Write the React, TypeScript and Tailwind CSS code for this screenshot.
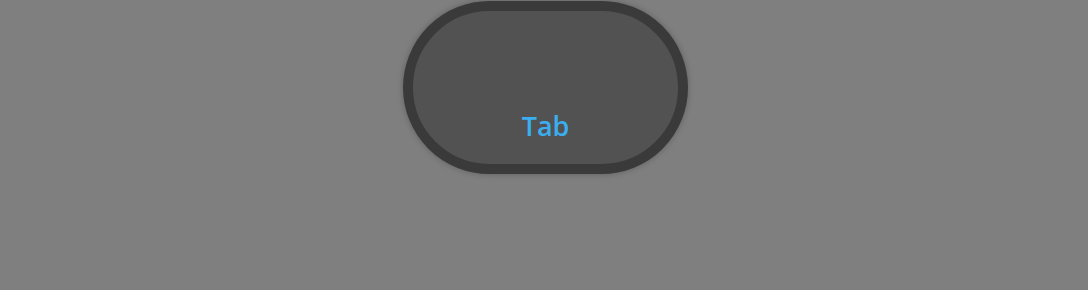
export default function App() {
  return (
    <div className="w-[1088px] h-[290px] bg-[#7f7f7f] flex justify-center pt-px pl-[3px]">
      <div className="w-[285px] h-[173px] rounded-full border-[10px] border-[#3a3a3a] bg-[#525252] shadow-[0_0_6px_rgba(0,0,0,0.25)] flex flex-col items-center pt-[96px]">
        <span
          className="text-[27px] leading-[37px] font-semibold text-[#3aaef0]"
          style={{ fontFamily: '"Open Sans", "Noto Sans", sans-serif' }}
        >
          Tab
        </span>
      </div>
    </div>
  )
}
